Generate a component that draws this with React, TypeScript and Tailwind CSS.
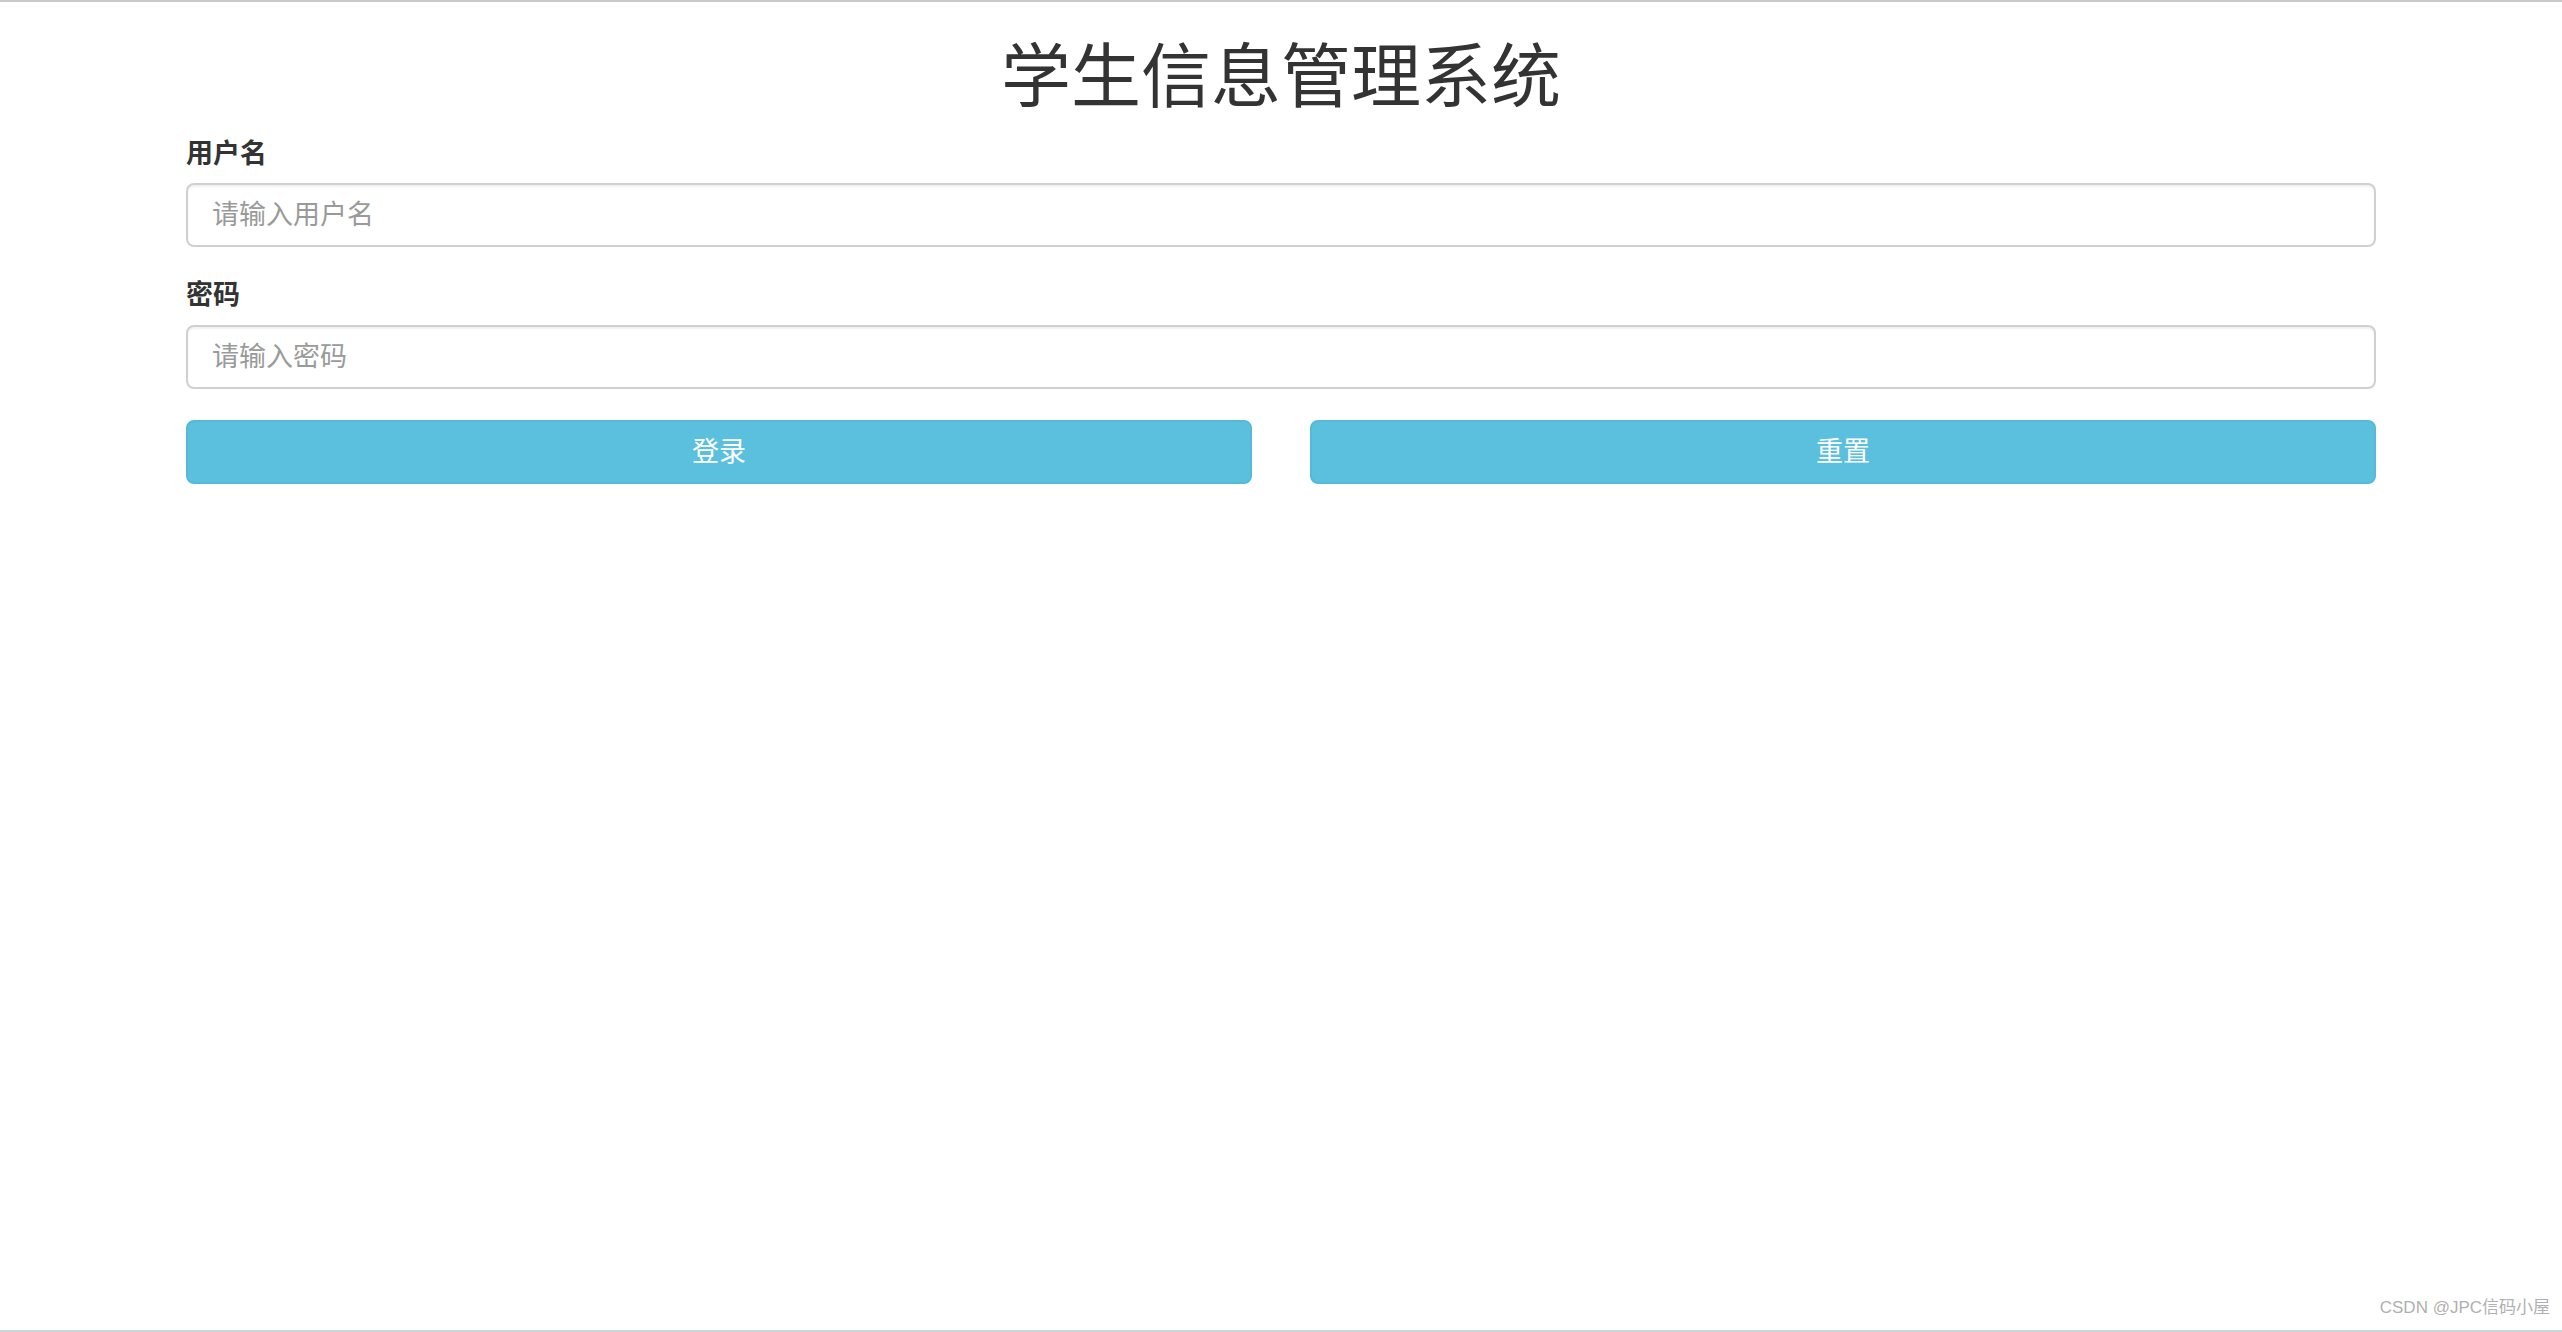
import { useState } from 'react'

const font = { fontFamily: '"Liberation Sans", "Noto Sans CJK SC", sans-serif' }

export default function App() {
  const [username, setUsername] = useState('')
  const [password, setPassword] = useState('')

  const inputClass =
    'block w-full h-[64px] rounded-[8px] border-2 border-[#d0d0d0] bg-white px-[24px] text-[27px] text-[#555] placeholder:text-[#9a9a9a] shadow-[inset_0_2px_2px_rgba(0,0,0,0.06)] focus:outline-none'

  return (
    <div
      className="relative flex min-h-screen flex-col border-t-2 border-[#c8c8c8] bg-white text-[#333]"
      style={font}
    >
      <div className="mx-auto w-[2190px] flex-1">
        {/* ── 标题 ── */}
        <h1 className="mt-[28px] text-center text-[70px] font-normal leading-[96px] text-[#333]">
          学生信息管理系统
        </h1>

        {/* ── 登录表单 ── */}
        <form className="mt-[14px]" onSubmit={(e) => e.preventDefault()}>
          <div>
            <label className="mb-[15px] block text-[27px] font-bold leading-[28px] text-[#333]">用户名</label>
            <input
              type="text"
              value={username}
              onChange={(e) => setUsername(e.target.value)}
              placeholder="请输入用户名"
              className={inputClass}
            />
          </div>

          <div className="mt-[34px]">
            <label className="mb-[16px] block text-[27px] font-bold leading-[28px] text-[#333]">密码</label>
            <input
              type="password"
              value={password}
              onChange={(e) => setPassword(e.target.value)}
              placeholder="请输入密码"
              className={inputClass}
            />
          </div>

          <div className="mt-[31px] grid grid-cols-2 gap-[58px]">
            <button
              type="submit"
              className="h-[64px] rounded-[8px] border-2 border-[#55b9d7] bg-[#5bc0de] text-[27px] text-white"
            >
              登录
            </button>
            <button
              type="button"
              onClick={() => {
                setUsername('')
                setPassword('')
              }}
              className="h-[64px] rounded-[8px] border-2 border-[#55b9d7] bg-[#5bc0de] text-[27px] text-white"
            >
              重置
            </button>
          </div>
        </form>
      </div>

      <div className="flex justify-end px-[12px] pb-[10px]">
        <span className="text-[17px] text-[#b0b0b0]">CSDN @JPC信码小屋</span>
      </div>
      <div className="h-[2px] bg-[#c9d5d8]" />
    </div>
  )
}
